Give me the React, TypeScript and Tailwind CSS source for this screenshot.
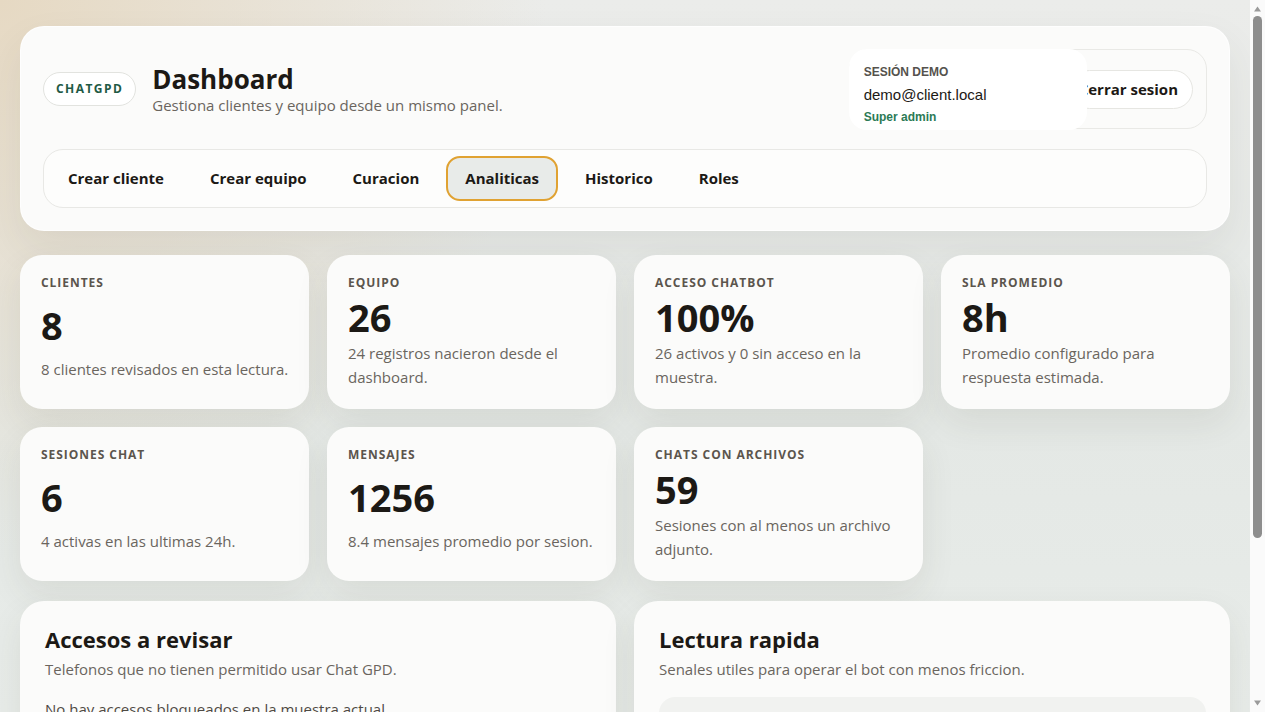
import React from 'react';

const TABS = ['Crear cliente', 'Crear equipo', 'Curacion', 'Analiticas', 'Historico', 'Roles'];

const STATS = [
  { label: 'Clientes', value: '8', note: '8 clientes revisados en esta lectura.' },
  { label: 'Equipo', value: '26', note: '24 registros nacieron desde el dashboard.' },
  { label: 'Acceso chatbot', value: '100%', note: '26 activos y 0 sin acceso en la muestra.' },
  { label: 'SLA promedio', value: '8h', note: 'Promedio configurado para respuesta estimada.' },
  { label: 'Sesiones chat', value: '6', note: '4 activas en las ultimas 24h.' },
  { label: 'Mensajes', value: '1256', note: '8.4 mensajes promedio por sesion.' },
  { label: 'Chats con archivos', value: '59', note: 'Sesiones con al menos un archivo adjunto.' },
];

const SIGNALS = [
  { title: 'Cobertura del bot', text: 'Todos los telefonos del equipo tienen acceso habilitado.' },
  { title: 'Tiempo de respuesta', text: 'El SLA promedio se mantiene en 8h para los clientes activos.' },
];

function StatCard({ label, value, note }: { label: string; value: string; note: string }) {
  return (
    <div className="grid rounded-[22px] bg-[#fbfbfa] py-5 pl-[21px] pr-5 shadow-[0_14px_34px_rgba(70,62,45,0.09)]">
      <div className="text-[12px] font-bold uppercase leading-4 tracking-[0.08em] text-[#5b554d]">{label}</div>
      <div className="mt-[6px] text-[38px] font-bold leading-10 text-[#1c1915]">{value}</div>
      <p className="mt-1 text-[15px] leading-6 text-[#6a655e]">{note}</p>
    </div>
  );
}

// classic scrollbar strip drawn beside the scrolling area
function ScrollStrip() {
  return (
    <div className="flex w-[15px] shrink-0 flex-col items-center bg-[#fafafa] py-[3px]">
      <svg width="9" height="8" viewBox="0 0 9 8" className="mt-[2px]">
        <path d="M4.5 1.5 L8 6.5 L1 6.5 Z" fill="#9a9a9a" />
      </svg>
      <div className="mt-[3px] h-[522px] w-[9px] rounded-full bg-[#8d8d8d]" />
      <div className="flex-1" />
      <svg width="9" height="8" viewBox="0 0 9 8" className="mb-[2px]">
        <path d="M1 1.5 L8 1.5 L4.5 6.5 Z" fill="#9a9a9a" />
      </svg>
    </div>
  );
}

export default function App() {
  return (
    <div className="flex h-screen">
      <div
        className="flex-1 overflow-hidden bg-[radial-gradient(circle_at_0%_0%,#e6d9c3_0%,rgba(230,217,195,0)_38%),linear-gradient(180deg,#ebecea_0%,#e4e8e5_60%,#e8ece9_100%)] px-5 pb-6 pt-[26px] text-[#1c1915]"
        style={{ fontFamily: '"Open Sans", "Noto Sans", sans-serif' }}
      >
        {/* header */}
        <header className="rounded-[24px] border border-white/80 bg-[#fbfbfa] p-[22px] shadow-[0_18px_40px_rgba(70,62,45,0.08)]">
          <div className="flex items-center justify-between">
            <div className="flex items-center gap-4">
              <span className="rounded-full border border-[#e2e3df] bg-white px-3 py-[7px] text-[12px] font-bold leading-[18px] tracking-[0.12em] text-[#1f5a45]">
                CHATGPD
              </span>
              <div>
                <h1 className="text-[26px] font-bold leading-8 text-[#1c1915]">Dashboard</h1>
                <p className="text-[15px] leading-5 text-[#6a655e]">Gestiona clientes y equipo desde un mismo panel.</p>
              </div>
            </div>

            <div className="flex h-[80px] items-center rounded-[20px] border border-[#e9e9e6] pr-[13px]">
              <div
                className="relative z-10 -my-px -ml-px flex h-[81px] w-[238px] flex-col rounded-[18px] bg-white pl-[15px] pt-[15px]"
                style={{ fontFamily: '"Liberation Sans", Arial, sans-serif' }}
              >
                <span className="text-[12px] font-bold leading-4 text-[#55524d]">SESIÓN DEMO</span>
                <span className="mt-[6px] text-[15px] leading-[18px] text-[#1c1915]">demo@client.local</span>
                <span className="mt-[5px] text-[12px] font-bold leading-4 text-[#2c7a55]">Super admin</span>
              </div>
              <button className="-ml-[17px] h-[39px] rounded-full border border-[#e6e6e2] bg-white pl-[8px] pr-[14px] text-[15px] font-bold text-[#1c1915]">
                Cerrar sesion
              </button>
            </div>
          </div>

          <nav className="mt-5 flex gap-2 rounded-[20px] border border-[#e8e8e5] bg-[#fdfdfc] px-[5px] py-[6px]">
            {TABS.map((t) => (
              <button
                key={t}
                className={
                  t === 'Analiticas'
                    ? 'rounded-[14px] border-2 border-[#e0a232] bg-[#e8ebe9] px-[17px] py-[10px] text-[15px] font-bold leading-[21px] text-[#1c1915]'
                    : 'rounded-[14px] border-2 border-transparent px-[17px] py-[10px] text-[15px] font-bold leading-[21px] text-[#1c1915]'
                }
              >
                {t}
              </button>
            ))}
          </nav>
        </header>

        {/* stat cards */}
        <section className="mt-6 grid grid-cols-4 gap-[18px]">
          {STATS.map((s) => (
            <StatCard key={s.label} {...s} />
          ))}
        </section>

        {/* bottom panels */}
        <section className="mt-5 grid grid-cols-2 gap-[18px]">
          <div className="rounded-[24px] bg-[#fbfbfa] py-6 pl-[25px] pr-6 shadow-[0_14px_34px_rgba(70,62,45,0.09)]">
            <h2 className="text-[22px] font-bold leading-7">Accesos a revisar</h2>
            <p className="mt-[4px] text-[15px] leading-6 text-[#6a655e]">Telefonos que no tienen permitido usar Chat GPD.</p>
            <p className="mt-[16px] text-[15px] leading-6 text-[#4f4a44]">No hay accesos bloqueados en la muestra actual.</p>
          </div>

          <div className="rounded-[24px] bg-[#fbfbfa] py-6 pl-[25px] pr-6 shadow-[0_14px_34px_rgba(70,62,45,0.09)]">
            <h2 className="text-[22px] font-bold leading-7">Lectura rapida</h2>
            <p className="mt-[4px] text-[15px] leading-6 text-[#6a655e]">Senales utiles para operar el bot con menos friccion.</p>
            <div className="mt-4 flex flex-col gap-3">
              {SIGNALS.map((s) => (
                <div key={s.title} className="rounded-[16px] bg-[#f1f2f0] px-4 py-3">
                  <div className="text-[15px] font-bold leading-6">{s.title}</div>
                  <div className="text-[14px] leading-5 text-[#6a655e]">{s.text}</div>
                </div>
              ))}
            </div>
          </div>
        </section>
      </div>
      <ScrollStrip />
    </div>
  );
}
